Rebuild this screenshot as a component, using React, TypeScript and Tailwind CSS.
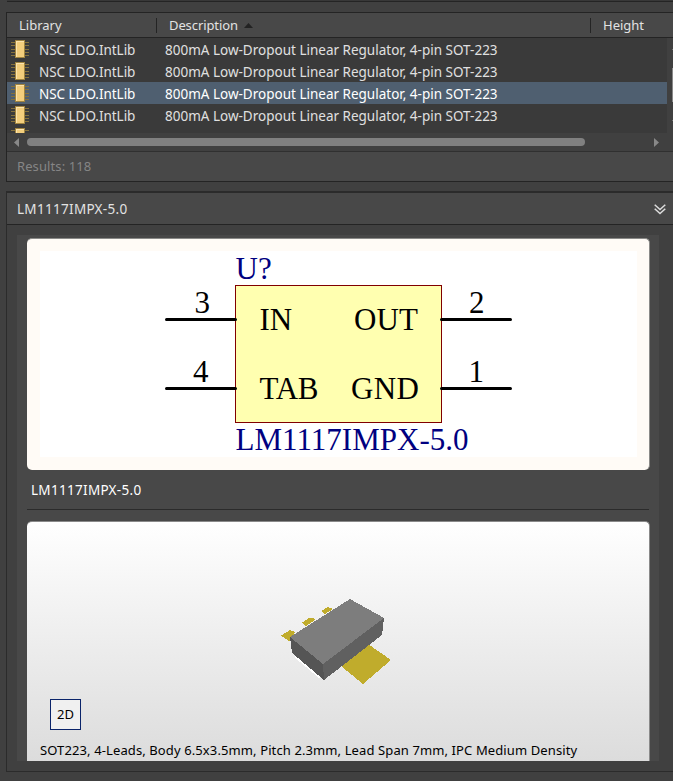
const ROW_TEXT = "800mA Low-Dropout Linear Regulator, 4-pin SOT-223";

function ChipIcon() {
  return (
    <svg width="18" height="18" viewBox="0 0 18 18" shapeRendering="crispEdges" className="block shrink-0">
      {[2, 5, 9, 12, 15].map((y) => (
        <rect key={y} x="0" y={y} width="18" height="1" fill="#85713c" />
      ))}
      <rect x="4" y="0" width="10" height="18" fill="#a08440" />
      <rect x="5" y="1" width="8" height="16" fill="#fbe3ae" />
      <rect x="6" y="2" width="7" height="15" fill="#f3ce7c" />
    </svg>
  );
}

function ResultRow({ selected = false }: { selected?: boolean }) {
  return (
    <div
      className={`flex h-[22px] w-[660px] shrink-0 items-start whitespace-nowrap text-[13.5px] leading-[24px] ${
        selected ? "bg-[#4f5f70] text-white" : "text-[#e0e0e0]"
      }`}
    >
      <div className="w-8 shrink-0 pl-1 pt-[2px]">
        <ChipIcon />
      </div>
      <div className="w-[126px] shrink-0 tracking-[-0.04px]">NSC LDO.IntLib</div>
      <div>{ROW_TEXT}</div>
    </div>
  );
}

function ResultsPanel() {
  return (
    <section className="flex h-[170px] shrink-0 flex-col border border-r-0 border-[#242424] bg-[#484848]">
      <div className="flex h-[25px] shrink-0 items-center border-b border-[#242424] text-[#e2e2e2]">
        <div className="w-[149px] pl-3 pt-[2px]">Library</div>
        <div className="h-[15px] w-px bg-[#242424]" />
        <div className="flex w-[433px] items-center gap-[6px] pl-3">
          <span className="pt-[2px] tracking-[-0.1px]">Description</span>
          <svg width="9" height="5" viewBox="0 0 9 5">
            <path d="M4.5 0 9 5H0z" fill="#222" />
          </svg>
        </div>
        <div className="h-[15px] w-px bg-[#242424]" />
        <div className="pl-3 pt-[2px]">Height</div>
      </div>
      <div className="flex h-[113px] shrink-0 bg-[#404040]">
        <div className="flex w-[660px] shrink-0 flex-col">
          <div className="flex h-[95px] flex-col overflow-hidden bg-[#3a3a3a]">
            <ResultRow />
            <ResultRow />
            <ResultRow selected />
            <ResultRow />
            <div className="pl-1 pt-[2px]">
              <ChipIcon />
            </div>
          </div>
          <div className="flex h-[18px] items-center pl-[7px]">
            <svg width="5" height="9" viewBox="0 0 5 9">
              <path d="M5 0v9L0 4.5z" fill="#888" />
            </svg>
            <div className="ml-2 h-2 w-[558px] rounded-full bg-[#808080]" />
            <svg width="5" height="9" viewBox="0 0 5 9" className="ml-[69px]">
              <path d="M0 0v9l5-4.5z" fill="#888" />
            </svg>
          </div>
        </div>
        <div className="flex w-[6px] flex-col items-end">
          <div className="mt-[11px] h-px w-px bg-[#777]" />
          <div className="mt-[18px] h-[34px] w-px bg-[#888]" />
          <div className="mt-[18px] h-px w-px bg-[#777]" />
        </div>
      </div>
      <div className="flex flex-1 items-center border-t border-[#303030] pl-[10px] tracking-[0.1px] text-[#858585]">
        Results: 118
      </div>
    </section>
  );
}

function Schematic() {
  return (
    <svg
      width="622"
      height="231"
      viewBox="27 239 622 231"
      className="block"
      fontFamily="'Liberation Serif', 'Times New Roman', serif"
      fontSize="31"
      fill="#000"
    >
      <rect x="40" y="251" width="597" height="206" fill="#fff" />
      <rect x="235.5" y="285.5" width="206" height="137" fill="#ffffb0" stroke="#800000" />
      <g stroke="#000" strokeWidth="3" strokeLinecap="round">
        <path d="M166.500 319.500H235.500M166.500 388.500H235.500M441.500 319.500H510.500M441.500 388.500H510.500" />
      </g>
      <g fill="#000080">
        <text x="235.500" y="279">U?</text>
        <text x="235.500" y="450" textLength="233">LM1117IMPX-5.0</text>
      </g>
      <text x="259.500" y="330">IN</text>
      <text x="354" y="330" textLength="64">OUT</text>
      <text x="259.500" y="399" textLength="59">TAB</text>
      <text x="351" y="399" textLength="68">GND</text>
      <text x="194.500" y="313">3</text>
      <text x="193" y="382">4</text>
      <text x="469" y="313">2</text>
      <text x="468.500" y="382">1</text>
    </svg>
  );
}

function Package3D() {
  return (
    <svg width="112" height="90" viewBox="280 597 112 90" className="block" shapeRendering="crispEdges">
      <g fill="#c0ac2c">
        <path d="M281 635.500 290 630 295 632 292 641 289 641z" />
        <path d="M302 622.500 309 618 313 618 315 620 306 626z" />
        <path d="M321 611 328 607 333 609 325 614z" />
        <path d="M341 666 368 644 391 660 363 684z" />
      </g>
      <path d="M295 656.500 320 677.500" stroke="#fff" strokeWidth="2" />
      <path d="M290 637 324 663 324 680 292 653z" fill="#555" />
      <path d="M323 663 384 618 382 635 324 680z" fill="#606060" />
      <path d="M350 599 384 618 323 664 290 637z" fill="#7d7d7d" />
    </svg>
  );
}

function PreviewPanel() {
  return (
    <section className="mt-[9px] flex h-[581px] shrink-0 flex-col border border-r-0 border-t-2 border-[#2b2b2b] bg-[#404040]">
      <header className="flex h-8 shrink-0 items-center justify-between border-b border-[#242424] bg-[#484848] pl-[10px] pr-[7px] text-[#e2e2e2]">
        <span className="pt-[2px] text-[13.5px] tracking-[0.3px]">LM1117IMPX-5.0</span>
        <svg width="12" height="11" viewBox="0 0 12 11" fill="none" stroke="#ddd" strokeWidth="1.500" className="mt-px">
          <path d="M.7.700 6 5.500 11.300.7M.7 4.700 6 9.500 11.300 4.700" />
        </svg>
      </header>
      <div className="ml-[10px] mt-[10px] flex h-[526px] w-[642px] shrink-0 flex-col overflow-hidden bg-[#484848] pl-[10px] pt-[3px]">
        <div className="h-[232px] w-[623px] shrink-0 overflow-hidden rounded-[5px] border-r border-t border-[#8a8a88] bg-[#fffbf6]">
          <Schematic />
        </div>
        <div className="flex h-[40px] w-[622px] shrink-0 items-center border-b border-[#2b2b2b] pl-1 pt-[2px] text-[13.5px] tracking-[0.3px] text-white">
          LM1117IMPX-5.0
        </div>
        <div className="mt-[11px] flex h-[240px] w-[623px] shrink-0 flex-col rounded-t-[5px] border-r border-t border-[#8a8a8a] bg-linear-to-b from-white to-[#dcdcdc] text-black">
          <div className="ml-[253px] mt-[75px]">
            <Package3D />
          </div>
          <div className="ml-[23px] mt-3 flex h-[31px] w-[31px] shrink-0 items-center justify-center border border-[#0a246a] bg-[#f0f0f0] pt-px">
            2D
          </div>
          <div className="ml-[13px] mt-[10px] whitespace-nowrap leading-5 tracking-[0.11px]">
            SOT223, 4-Leads, Body 6.5x3.5mm, Pitch 2.3mm, Lead Span 7mm, IPC Medium Density
          </div>
        </div>
      </div>
    </section>
  );
}

export default function App() {
  return (
    <main className="flex h-[781px] w-[673px] flex-col overflow-hidden bg-[#404040] font-['Noto_Sans','Open_Sans',sans-serif] text-[13px]">
      <div className="ml-[7px] h-[2px] shrink-0 border-b border-[#242424] bg-[#383838]" />
      <div className="ml-[6px] mt-[10px] flex flex-col">
        <ResultsPanel />
        <PreviewPanel />
      </div>
    </main>
  );
}
